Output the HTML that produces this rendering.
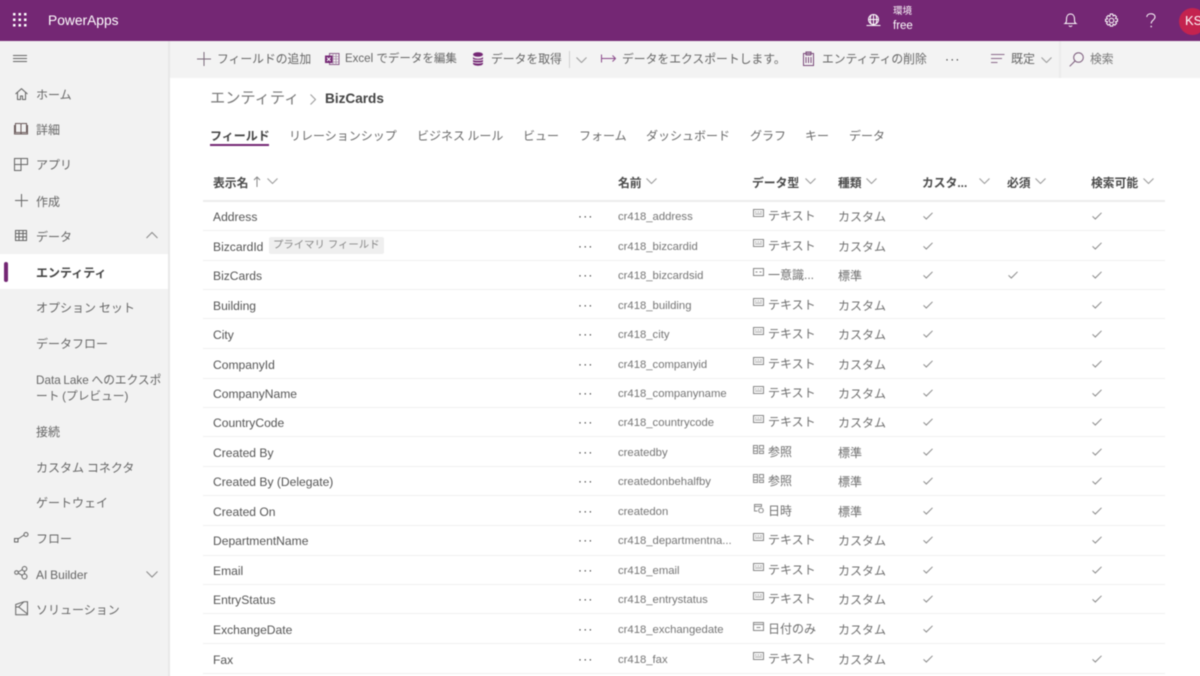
<!DOCTYPE html>
<html lang="ja">
<head>
<meta charset="utf-8">
<title>PowerApps</title>
<style>
html,body{margin:0;padding:0;width:1200px;height:676px;overflow:hidden;background:#fff}
#w{position:relative;width:1200px;height:676px;background:#fff;filter:blur(.45px);font-family:"Liberation Sans","Noto Sans CJK JP",sans-serif;font-size:12px;color:#555}
.a,.r span,.r svg{position:absolute;white-space:nowrap}
.a{line-height:20px}
svg{overflow:visible;fill:none;stroke-width:1}
.b{background:#742774;position:absolute;left:-6px;top:-6px;width:1212px;height:47px}
.s{position:absolute;left:-6px;top:41px;width:174px;height:641px;background:#f2f2f2;border-right:2px solid #e8e8e8}
.t{position:absolute;left:170px;top:41px;width:1036px;height:37px;background:#f3f3f3}
.n{color:#666;margin-top:1px;word-spacing:-.5px}
.tb{color:#666}
.tab{color:#6a6a6a;font-size:12px;margin-top:1px;word-spacing:-1px}
.h{font-weight:bold;color:#4a4a4a;font-size:11.8px;margin-top:1px}
.r{position:absolute;left:203px;width:962px;height:29px;border-bottom:1px solid #f0f0f0;box-sizing:border-box}
.r span{line-height:20px;top:1px}
.r .c1{left:10px;color:#555;font-size:12.1px}
.r .d{left:375px;top:0;color:#333;font-size:12px;letter-spacing:1.200px}
.r .c2{left:415px;color:#757575;font-size:11.3px}
.r .c3{left:565px;top:0;color:#6e6e6e;font-size:12px}
.r .c4{left:635px;color:#6e6e6e;font-size:12px}
.r .ic{left:550px;top:3px;width:11px;height:9px;stroke:#888}
.r .k1,.r .k2,.r .k3{top:6px;width:10px;height:8px;stroke:#888}
.r .k1{left:720px}.r .k2{left:805px}.r .k3{left:889px}
.r .pill{left:66px;top:1px;height:17px;line-height:17px;background:#efefef;color:#888;padding:0 4px;font-size:10.4px;border-radius:2px}
</style>
</head>
<body>
<div id="w">
<svg width="0" height="0" style="position:absolute">
<defs>
<symbol id="tx" viewBox="0 0 11 9"><rect x=".5" y=".5" width="10" height="7" fill="none"/><path d="M2 3h1.500M4.500 3h1.500M7 3h2M2 5h7" fill="none" stroke-width=".8"/></symbol>
<symbol id="idf" viewBox="0 0 11 9"><rect x=".5" y=".5" width="10" height="7" fill="none"/><path d="M2.500 4h2M6.500 4h2" fill="none"/></symbol>
<symbol id="lk" viewBox="0 0 11 9"><path d="M.5.500h4v8h-4zM.5 3h4M.5 6h4M6.500.5h4v3.500h-4zM6.500 6h4v2.500h-4z" fill="none"/></symbol>
<symbol id="dt" viewBox="0 0 11 9"><path d="M8.500 3V.5h-7v6.500h3M1.500 2.500h7" fill="none"/><circle cx="8" cy="6.500" r="2.300" fill="none"/></symbol>
<symbol id="dy" viewBox="0 0 11 9"><path d="M.5.500h10v8h-10zM.5 2.500h10M3.500 5.500h4" fill="none"/></symbol>
<symbol id="ck" viewBox="0 0 10 8"><path d="M.5 4.300 3.300 7 9.500.8" fill="none"/></symbol>
<symbol id="dn" viewBox="0 0 11 6"><path d="M.5.500 5.500 5.500 10.500.500" fill="none"/></symbol>
</defs>
</svg>

<!-- top bar -->
<div class="b"></div>
<svg class="a" style="left:13px;top:13px" width="14" height="14"><g fill="#fff"><rect x="0" y="0" width="2.500" height="2.500"/><rect x="5.500" y="0" width="2.500" height="2.500"/><rect x="11" y="0" width="2.500" height="2.500"/><rect x="0" y="5.500" width="2.500" height="2.500"/><rect x="5.500" y="5.500" width="2.500" height="2.500"/><rect x="11" y="5.500" width="2.500" height="2.500"/><rect x="0" y="11" width="2.500" height="2.500"/><rect x="5.500" y="11" width="2.500" height="2.500"/><rect x="11" y="11" width="2.500" height="2.500"/></g></svg>
<div class="a" style="left:48px;top:11px;color:#fff;font-size:13.800px">PowerApps</div>
<svg class="a" style="left:866px;top:13px" width="15" height="14" stroke="#fff"><circle cx="7.500" cy="6.500" r="5"/><path d="M7.500 1.500v10M2.500 6.500h10M5 2.500c-1 3-1 5 0 8M10 2.500c1 3 1 5 0 8M.5 12.500h14"/></svg>
<div class="a" style="left:893px;top:2px;color:#fff;font-size:9.500px">環境</div>
<div class="a" style="left:893px;top:16px;color:#fff;font-size:11.500px">free</div>
<svg class="a" style="left:1064px;top:13px" width="13" height="15" stroke="#fff" stroke-width="1.200"><path d="M1 10.500c1.500-1 1.500-2 1.500-4.500C2.500 3 4 1 6.500 1s4 2 4 5c0 2.500 0 3.500 1.500 4.500zM5 12.500c.5 1.300 2.500 1.300 3 0"/></svg>
<svg class="a" style="left:1104px;top:13px" width="15" height="15" stroke="#fff" stroke-width="1.100"><circle cx="7.500" cy="7.500" r="2.300"/><path d="M6.300 1h2.400l.4 2 1.700-.9 1.700 1.700-1 1.700 2 .4v2.400l-2 .4 1 1.700-1.700 1.700-1.700-1-.4 2H6.300l-.4-2-1.700 1-1.700-1.700 1-1.700-2-.4V6.300l2-.4-1-1.700 1.700-1.700 1.700.9z"/></svg>
<svg class="a" style="left:1146px;top:13px" width="10" height="15" stroke="#fff" stroke-width="1.100"><path d="M.8 4C.8 2 2.500.7 5 .7s4 1.500 4 3.300c0 3-3.800 3-3.800 6.500"/><circle cx="5.200" cy="13.500" r=".8" fill="#fff" stroke="none"/></svg>
<div style="position:absolute;left:1179px;top:8px;width:27px;height:27px;border-radius:50%;background:#c4234f"></div>
<div class="a" style="left:1185px;top:11px;color:#fff;font-size:13px">KS</div>

<!-- sidebar -->
<div class="s"></div>
<div style="position:absolute;left:-6px;top:254px;width:174px;height:35px;background:#fff"></div>
<div style="position:absolute;left:4px;top:262px;width:4px;height:20px;background:#742774;border-radius:2px"></div>
<svg class="a" style="left:13px;top:55px" width="15" height="8" stroke="#666"><path d="M0 .5h14M0 3.500h14M0 6.500h14"/></svg>
<svg class="a" style="left:15px;top:88px" width="13" height="12" stroke="#666"><path d="M.5 6 6.500.7 12.500 6M2.500 4.500v7h3V8h2v3.500h3v-7"/></svg>
<div class="a n" style="left:36px;top:84px">ホーム</div>
<svg class="a" style="left:14px;top:122px" width="14" height="13" stroke="#6a5a5a"><path d="M1.500 1.500h4.500c.7 0 1 .5 1 1 0-.5.3-1 1-1h4.500v9H8c-.5 0-1 .3-1 1 0-.7-.5-1-1-1H1.500zM7 2.500v9"/><path d="M.5 3v9h13V3"/></svg>
<div class="a n" style="left:36px;top:119px">詳細</div>
<svg class="a" style="left:14px;top:158px" width="14" height="13" stroke="#666"><path d="M.5.500h13v6h-13zM.5 6.500v6h6.500V.5"/></svg>
<div class="a n" style="left:36px;top:154px">アプリ</div>
<svg class="a" style="left:15px;top:194px" width="13" height="13" stroke="#666"><path d="M6.500 0v13M0 6.500h13"/></svg>
<div class="a n" style="left:36px;top:191px">作成</div>
<svg class="a" style="left:15px;top:230px" width="12" height="11" stroke="#666"><path d="M.5.500h11v10h-11zM.5 3.500h11M.5 7h11M4 .5v10M8 .5v10"/></svg>
<div class="a n" style="left:36px;top:226px">データ</div>
<svg class="a" style="left:146px;top:232px" width="12" height="7" stroke="#888"><path d="M.5 6 6 .5 11.500 6"/></svg>
<div class="a n" style="left:36px;top:262px;font-weight:bold;color:#444">エンティティ</div>
<div class="a n" style="left:36px;top:297px">オプション セット</div>
<div class="a n" style="left:36px;top:333px">データフロー</div>
<div class="a n" style="left:36px;top:370px;font-size:11.700px">Data Lake へのエクスポ</div>
<div class="a n" style="left:36px;top:386px;font-size:11.700px">ート (プレビュー)</div>
<div class="a n" style="left:36px;top:421px">接続</div>
<div class="a n" style="left:36px;top:457px">カスタム コネクタ</div>
<div class="a n" style="left:36px;top:492px">ゲートウェイ</div>
<svg class="a" style="left:14px;top:532px" width="15" height="11" stroke="#666"><rect x=".5" y="6.500" width="3.500" height="3.500"/><circle cx="12" cy="2.500" r="2"/><path d="M4 7 10 3"/></svg>
<div class="a n" style="left:36px;top:528px">フロー</div>
<svg class="a" style="left:14px;top:566px" width="15" height="14" stroke="#666"><circle cx="2.500" cy="6.500" r="1.800"/><circle cx="10.500" cy="2.800" r="2.300"/><circle cx="10.500" cy="10.500" r="2.500"/><path d="M4.300 6 8.500 3.500M4.300 7.200 8.500 9.500M10.500 5v3"/></svg>
<div class="a n" style="left:36px;top:564px">AI Builder</div>
<svg class="a" style="left:146px;top:571px" width="12" height="7" stroke="#888"><path d="M.5.500 6 6 11.500.5"/></svg>
<svg class="a" style="left:15px;top:601px" width="14" height="15" stroke="#666" stroke-width="1.100"><path d="M.7 3.500 9 .7h3.500v13H.7zM.7 6h3L12.500 13M3.700 6 9 .7"/></svg>
<div class="a n" style="left:36px;top:599px">ソリューション</div>

<!-- toolbar -->
<div class="t"></div>
<svg class="a" style="left:197px;top:52px" width="14" height="14" stroke="#7a6a7a"><path d="M7 0v14M0 7h14"/></svg>
<div class="a tb" style="left:217px;top:49px;font-size:11.800px">フィールドの追加</div>
<svg class="a" style="left:325px;top:52px" width="15" height="14"><path d="M4.500 1.500h9.500v11H4.500z" stroke="#8a5a8a"/><path d="M8 1.500v11M11 1.500v11M4.500 4.500h9.500M4.500 7h9.500M4.500 10h9.500" stroke="#a98aa9" stroke-width=".8"/><rect x="0" y="3.500" width="7.500" height="7.500" fill="#742774"/><path d="M2 5.500 5.500 9M5.500 5.500 2 9" stroke="#fff"/></svg>
<div class="a tb" style="left:345px;top:49px;font-size:11.500px">Excel でデータを編集</div>
<svg class="a" style="left:472px;top:52px" width="12" height="14"><ellipse cx="6" cy="2.500" rx="5" ry="2.300" fill="#742774"/><path d="M1 4.500v7c0 1.300 2.200 2.200 5 2.200s5-.9 5-2.200v-7c0 1.300-2.200 2.200-5 2.200S1 5.800 1 4.500z" fill="#742774"/><path d="M1 7.300c1 1.300 9 1.300 10 0M1 10c1 1.300 9 1.300 10 0" stroke="#f3f3f3"/></svg>
<div class="a tb" style="left:491px;top:49px;font-size:11.800px">データを取得</div>
<div style="position:absolute;left:568.500px;top:51px;width:1px;height:17px;background:#d0d0d0"></div>
<svg class="a" style="left:576px;top:57px" width="11" height="6" stroke="#999"><use href="#dn" width="11" height="6"/></svg>
<svg class="a" style="left:601px;top:54px" width="16" height="10" stroke="#8a4a8a"><path d="M.5.500v8M.5 4.500h14M11.500 1.500l3 3-3 3"/></svg>
<div class="a tb" style="left:622px;top:49px;font-size:11.800px">データをエクスポートします。</div>
<svg class="a" style="left:803px;top:51px" width="11" height="15" stroke="#7a4a7a"><path d="M.5 2.500h10v12H.5zM3 1h5v3H3zM3 6v6M5.500 6v6M8 6v6"/></svg>
<div class="a tb" style="left:822px;top:49px;font-size:11.800px">エンティティの削除</div>
<div class="a" style="left:945px;top:49px;color:#333;font-size:12px;letter-spacing:1.200px">···</div>
<svg class="a" style="left:991px;top:54px" width="14" height="10" stroke="#8a6a8a"><path d="M0 .5h13.500M0 4.500h11M0 8.500h6.500"/></svg>
<div class="a tb" style="left:1011px;top:49px">既定</div>
<svg class="a" style="left:1041px;top:57px" width="11" height="6" stroke="#999"><use href="#dn" width="11" height="6"/></svg>
<div style="position:absolute;left:1058.500px;top:41px;width:2px;height:37px;background:#ebebeb"></div>
<svg class="a" style="left:1069px;top:52px" width="15" height="15" stroke="#7a5a7a" stroke-width="1.100"><circle cx="9.500" cy="5.500" r="4.800"/><path d="M6 9 .7 14.300"/></svg>
<div class="a" style="left:1090px;top:49px;color:#777;font-size:11.800px">検索</div>

<!-- breadcrumb -->
<div class="a" style="left:210px;top:89px;font-size:15.200px;color:#777">エンティティ</div>
<svg class="a" style="left:310px;top:94px" width="6" height="11" stroke="#999"><path d="M.5.500 5.500 5.500 .5 10.500"/></svg>
<div class="a" style="left:325px;top:89px;font-size:13.600px;font-weight:bold;color:#444">BizCards</div>

<!-- tabs -->
<div class="a tab" style="left:210px;top:125px;font-weight:bold;color:#444">フィールド</div>
<div style="position:absolute;left:210px;top:144px;width:59px;height:2px;background:#742774"></div>
<div class="a tab" style="left:289px;top:125px">リレーションシップ</div>
<div class="a tab" style="left:417px;top:125px">ビジネス ルール</div>
<div class="a tab" style="left:523px;top:125px">ビュー</div>
<div class="a tab" style="left:579px;top:125px">フォーム</div>
<div class="a tab" style="left:646px;top:125px">ダッシュボード</div>
<div class="a tab" style="left:750px;top:125px">グラフ</div>
<div class="a tab" style="left:805px;top:125px">キー</div>
<div class="a tab" style="left:849px;top:125px">データ</div>

<!-- header -->
<div class="a h" style="left:213px;top:172px">表示名</div>
<svg class="a" style="left:253px;top:176px" width="8" height="11" stroke="#888"><path d="M4 11V1M1 4l3-3 3 3"/></svg>
<svg class="a" style="left:267px;top:178px" width="11" height="6" stroke="#999"><use href="#dn" width="11" height="6"/></svg>
<div class="a h" style="left:618px;top:172px">名前</div>
<svg class="a" style="left:646px;top:178px" width="11" height="6" stroke="#999"><use href="#dn" width="11" height="6"/></svg>
<div class="a h" style="left:752px;top:172px">データ型</div>
<svg class="a" style="left:805px;top:178px" width="11" height="6" stroke="#999"><use href="#dn" width="11" height="6"/></svg>
<div class="a h" style="left:838px;top:172px">種類</div>
<svg class="a" style="left:866px;top:178px" width="11" height="6" stroke="#999"><use href="#dn" width="11" height="6"/></svg>
<div class="a h" style="left:922px;top:172px">カスタ...</div>
<svg class="a" style="left:979px;top:178px" width="11" height="6" stroke="#999"><use href="#dn" width="11" height="6"/></svg>
<div class="a h" style="left:1007px;top:172px">必須</div>
<svg class="a" style="left:1035px;top:178px" width="11" height="6" stroke="#999"><use href="#dn" width="11" height="6"/></svg>
<div class="a h" style="left:1091px;top:172px">検索可能</div>
<svg class="a" style="left:1143px;top:178px" width="11" height="6" stroke="#999"><use href="#dn" width="11" height="6"/></svg>
<div style="position:absolute;left:203px;top:200px;width:962px;height:2px;background:#ececec"></div>

<!-- rows -->
<div class="r" style="top:206px;height:25px"><span class="c1">Address</span><span class="d">···</span><span class="c2">cr418_address</span><svg class="ic"><use href="#tx" width="11" height="9"/></svg><span class="c3">テキスト</span><span class="c4">カスタム</span><svg class="k1"><use href="#ck" width="10" height="8"/></svg><svg class="k3"><use href="#ck" width="10" height="8"/></svg></div>
<div class="r" style="top:236px;height:25px"><span class="c1">BizcardId</span><span class="pill">プライマリ フィールド</span><span class="d">···</span><span class="c2">cr418_bizcardid</span><svg class="ic"><use href="#tx" width="11" height="9"/></svg><span class="c3">テキスト</span><span class="c4">カスタム</span><svg class="k1"><use href="#ck" width="10" height="8"/></svg><svg class="k3"><use href="#ck" width="10" height="8"/></svg></div>
<div class="r" style="top:265px;height:25px"><span class="c1">BizCards</span><span class="d">···</span><span class="c2">cr418_bizcardsid</span><svg class="ic"><use href="#idf" width="11" height="9"/></svg><span class="c3">一意識...</span><span class="c4">標準</span><svg class="k1"><use href="#ck" width="10" height="8"/></svg><svg class="k2"><use href="#ck" width="10" height="8"/></svg><svg class="k3"><use href="#ck" width="10" height="8"/></svg></div>
<div class="r" style="top:295px;height:24px"><span class="c1">Building</span><span class="d">···</span><span class="c2">cr418_building</span><svg class="ic"><use href="#tx" width="11" height="9"/></svg><span class="c3">テキスト</span><span class="c4">カスタム</span><svg class="k1"><use href="#ck" width="10" height="8"/></svg><svg class="k3"><use href="#ck" width="10" height="8"/></svg></div>
<div class="r" style="top:324px;height:25px"><span class="c1">City</span><span class="d">···</span><span class="c2">cr418_city</span><svg class="ic"><use href="#tx" width="11" height="9"/></svg><span class="c3">テキスト</span><span class="c4">カスタム</span><svg class="k1"><use href="#ck" width="10" height="8"/></svg><svg class="k3"><use href="#ck" width="10" height="8"/></svg></div>
<div class="r" style="top:354px;height:25px"><span class="c1">CompanyId</span><span class="d">···</span><span class="c2">cr418_companyid</span><svg class="ic"><use href="#tx" width="11" height="9"/></svg><span class="c3">テキスト</span><span class="c4">カスタム</span><svg class="k1"><use href="#ck" width="10" height="8"/></svg><svg class="k3"><use href="#ck" width="10" height="8"/></svg></div>
<div class="r" style="top:383px;height:25px"><span class="c1">CompanyName</span><span class="d">···</span><span class="c2">cr418_companyname</span><svg class="ic"><use href="#tx" width="11" height="9"/></svg><span class="c3">テキスト</span><span class="c4">カスタム</span><svg class="k1"><use href="#ck" width="10" height="8"/></svg><svg class="k3"><use href="#ck" width="10" height="8"/></svg></div>
<div class="r" style="top:412px;height:25px"><span class="c1">CountryCode</span><span class="d">···</span><span class="c2">cr418_countrycode</span><svg class="ic"><use href="#tx" width="11" height="9"/></svg><span class="c3">テキスト</span><span class="c4">カスタム</span><svg class="k1"><use href="#ck" width="10" height="8"/></svg><svg class="k3"><use href="#ck" width="10" height="8"/></svg></div>
<div class="r" style="top:442px;height:25px"><span class="c1">Created By</span><span class="d">···</span><span class="c2">createdby</span><svg class="ic"><use href="#lk" width="11" height="9"/></svg><span class="c3">参照</span><span class="c4">標準</span><svg class="k1"><use href="#ck" width="10" height="8"/></svg><svg class="k3"><use href="#ck" width="10" height="8"/></svg></div>
<div class="r" style="top:471px;height:25px"><span class="c1">Created By (Delegate)</span><span class="d">···</span><span class="c2">createdonbehalfby</span><svg class="ic"><use href="#lk" width="11" height="9"/></svg><span class="c3">参照</span><span class="c4">標準</span><svg class="k1"><use href="#ck" width="10" height="8"/></svg><svg class="k3"><use href="#ck" width="10" height="8"/></svg></div>
<div class="r" style="top:501px;height:25px"><span class="c1">Created On</span><span class="d">···</span><span class="c2">createdon</span><svg class="ic"><use href="#dt" width="11" height="9"/></svg><span class="c3">日時</span><span class="c4">標準</span><svg class="k1"><use href="#ck" width="10" height="8"/></svg><svg class="k3"><use href="#ck" width="10" height="8"/></svg></div>
<div class="r" style="top:530px;height:26px"><span class="c1">DepartmentName</span><span class="d">···</span><span class="c2">cr418_departmentna...</span><svg class="ic"><use href="#tx" width="11" height="9"/></svg><span class="c3">テキスト</span><span class="c4">カスタム</span><svg class="k1"><use href="#ck" width="10" height="8"/></svg><svg class="k3"><use href="#ck" width="10" height="8"/></svg></div>
<div class="r" style="top:560px;height:25px"><span class="c1">Email</span><span class="d">···</span><span class="c2">cr418_email</span><svg class="ic"><use href="#tx" width="11" height="9"/></svg><span class="c3">テキスト</span><span class="c4">カスタム</span><svg class="k1"><use href="#ck" width="10" height="8"/></svg><svg class="k3"><use href="#ck" width="10" height="8"/></svg></div>
<div class="r" style="top:589px;height:25px"><span class="c1">EntryStatus</span><span class="d">···</span><span class="c2">cr418_entrystatus</span><svg class="ic"><use href="#tx" width="11" height="9"/></svg><span class="c3">テキスト</span><span class="c4">カスタム</span><svg class="k1"><use href="#ck" width="10" height="8"/></svg><svg class="k3"><use href="#ck" width="10" height="8"/></svg></div>
<div class="r" style="top:619px;height:25px"><span class="c1">ExchangeDate</span><span class="d">···</span><span class="c2">cr418_exchangedate</span><svg class="ic"><use href="#dy" width="11" height="9"/></svg><span class="c3">日付のみ</span><span class="c4">カスタム</span><svg class="k1"><use href="#ck" width="10" height="8"/></svg></div>
<div class="r" style="top:649px;height:25px"><span class="c1">Fax</span><span class="d">···</span><span class="c2">cr418_fax</span><svg class="ic"><use href="#tx" width="11" height="9"/></svg><span class="c3">テキスト</span><span class="c4">カスタム</span><svg class="k1"><use href="#ck" width="10" height="8"/></svg><svg class="k3"><use href="#ck" width="10" height="8"/></svg></div>
</div>
</body>
</html>
